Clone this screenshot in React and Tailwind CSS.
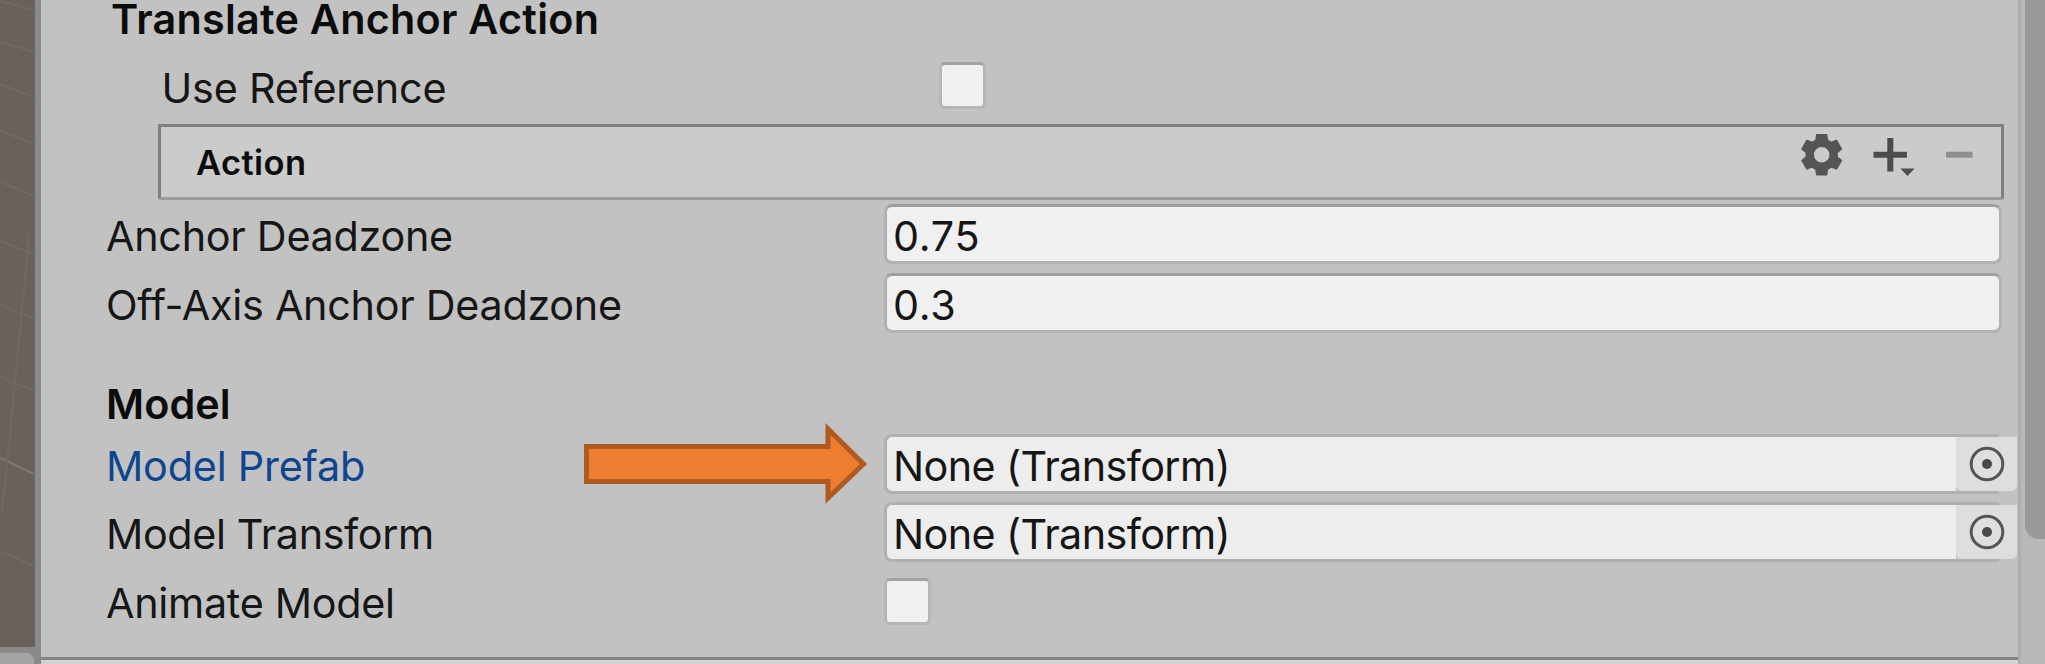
const label = 'shrink-0 whitespace-pre font-["Inter",sans-serif] text-[41.3px] leading-[65px]';

function Label({ children, className = 'tracking-[-0.28px] text-[#161616]' }) {
  return (
    <div className="w-[778px] shrink-0">
      <span className={`${label} ${className}`}>{children}</span>
    </div>
  );
}

function NumberField({ children }) {
  return (
    <div className="h-[60px] w-[1118px] rounded-[8px] border-[3px] border-[#b2b2b2] border-t-[#9f9f9f] bg-[#f0f0f0] pl-[6px]">
      <span className='block whitespace-pre font-["Inter",sans-serif] text-[41.3px] leading-[58px] tracking-[0.7px] text-[#161616]'>{children}</span>
    </div>
  );
}

function ObjectField({ children }) {
  return (
    <div className="flex h-[60px] w-[1133px]">
      <div className="flex h-[60px] w-[1072px] rounded-l-[8px] border-y-[3px] border-l-[3px] border-[#b0b0b0] bg-[#ededed] pl-[6px]">
        <span className='block whitespace-pre font-["Inter",sans-serif] text-[41.3px] leading-[59px] tracking-[-0.6px] text-[#161616]'>{children}</span>
      </div>
      <div className="flex w-[61px] flex-col">
        <div className="h-[3px] w-[43px] bg-[#b0b0b0]" />
        <div className="flex h-[54px] items-center justify-center rounded-b-[6px] bg-[#dedede]">
          <svg width="38" height="38" viewBox="0 0 38 38">
            <circle cx="19" cy="19" r="15.8" fill="none" stroke="#555" strokeWidth="3" />
            <circle cx="19" cy="19" r="5" fill="#4a4a4a" />
          </svg>
        </div>
        <div className="h-[3px] w-[43px] bg-[#b0b0b0]" />
      </div>
    </div>
  );
}

function Checkbox({ className }) {
  return <div className={`h-[47px] w-[47px] rounded-[6px] border-[3px] border-[#b6b6b6] border-t-[#a2a2a2] bg-[#f0f0f0] ${className}`} />;
}

function Row({ children }) {
  return <div className="flex h-[68.75px] shrink-0 items-start pl-[65px]">{children}</div>;
}

const teeth = [0, 60, 120, 180, 240, 300];

export default function App() {
  return (
    <div className="relative flex h-[664px] w-[2045px] overflow-hidden bg-[#c2c2c2]">
      <div className="flex w-[41px] shrink-0 flex-col bg-[#8a8a8a]">
        <div className="h-[647px] w-[35px] shrink-0 bg-[#6a615b]">
          <svg width="35" height="647" fill="none" stroke="#6d6b64" strokeWidth="2">
            <path d="M0 1L34 10M0 42L34 52M0 84L34 97M0 131L34 144M0 182L34 196M0 241L34 254M0 305L34 319M0 377L34 391M0 551L34 566" />
            <path d="M0 458L34 474" stroke="#7b7a74" />
            <path d="M29 235L22 310L15 380L10 435L2 510" />
          </svg>
        </div>
        <div className="mt-[6px] h-[11px] w-[34px] rounded-tr-[8px] bg-[#a5a5a5]" />
      </div>

      <div className="flex w-[1977px] shrink-0 flex-col">
        <div className="h-[56px] shrink-0 pl-[70px]">
          <span className='block whitespace-pre font-["Inter",sans-serif] text-[41.3px] font-semibold leading-[39px] tracking-[0.27px] text-[#0c0c0c]'>Translate Anchor Action</span>
        </div>
        <div className="flex h-[68px] shrink-0 items-start pl-[120.5px]">
          <div className="w-[777.5px] shrink-0">
            <span className={`${label} tracking-[-0.2px] text-[#161616]`}>Use Reference</span>
          </div>
          <Checkbox className="mt-[6px]" />
        </div>
        <div className="ml-[117px] flex h-[76px] w-[1846px] shrink-0 rounded-b-[3px] border-[3px] border-[#808080] border-b-[#9b9b9b] bg-[#cbcbcb]">
          <span className='ml-[35px] grow whitespace-pre font-["Inter",sans-serif] text-[34.5px] font-semibold leading-[72px] tracking-[0.4px] text-[#0c0c0c]'>Action</span>
          <svg width="190" height="70" viewBox="1790 127 190 70" className="mr-[21px] shrink-0">
            <g fill="#555" stroke="#555" strokeWidth="2" strokeLinejoin="round">
              {teeth.map((a) => (
                <path key={a} d="M1815.5 145L1817 135H1826.4L1828 145Z" transform={`rotate(${a} 1821.7 154.7)`} />
              ))}
            </g>
            <circle cx="1821.7" cy="154.7" r="12" fill="none" stroke="#555" strokeWidth="8.5" />
            <path d="M1873.5 154.7H1907M1890.3 138V171.5" stroke="#4c4c4c" strokeWidth="6" />
            <path d="M1900.5 168.5H1914.5L1907.5 176Z" fill="#4c4c4c" />
            <path d="M1946 154.7H1972.5" stroke="#8f8f8f" strokeWidth="6" />
          </svg>
        </div>
        <div className="h-[4px] shrink-0" />
        <Row><Label>Anchor Deadzone</Label><NumberField>0.75</NumberField></Row>
        <Row><Label>Off-Axis Anchor Deadzone</Label><NumberField>0.3</NumberField></Row>
        <div className="h-[92px] shrink-0 pl-[65px] pt-[30px]">
          <span className={`${label} block font-semibold tracking-[0.1px] text-[#0c0c0c]`}>Model</span>
        </div>
        <Row><Label className="tracking-[-0.2px] text-[#0d4590]">Model Prefab</Label><ObjectField>None (Transform)</ObjectField></Row>
        <Row><Label className="tracking-[-0.38px] text-[#161616]">Model Transform</Label><ObjectField>None (Transform)</ObjectField></Row>
        <Row><Label>Animate Model</Label><Checkbox className="mt-[7px]" /></Row>
        <div className="mt-auto h-[7px] shrink-0 border-t-[3px] border-[#858585] bg-[#d2d2d2]" />
      </div>

      <div className="w-[27px] border-l-[3px] border-[#adadad] bg-[#b8b8b8] pl-[4px]">
        <div className="h-[539px] w-[40px] rounded-bl-[14px] bg-[#999]" />
      </div>

      <svg className="absolute left-[584px] top-[418px]" width="288" height="92" viewBox="584 418 288 92">
        <path d="M586.5 446.5H828V429L863.5 464L828 498V481.5H586.5Z" fill="#ed7d31" stroke="#ae5a21" strokeWidth="5" />
      </svg>
    </div>
  );
}
